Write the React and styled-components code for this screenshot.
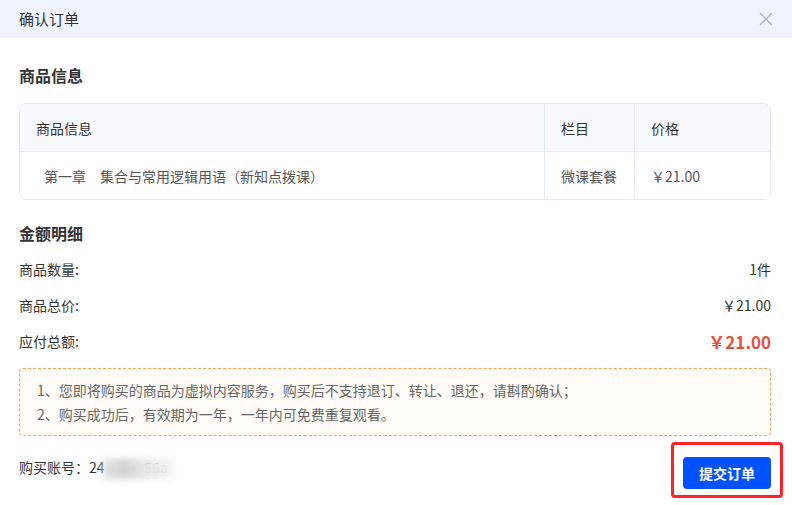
import React from "react";
import styled, { createGlobalStyle } from "styled-components";

const Global = createGlobalStyle`
  html, body { margin: 0; padding: 0; background: #fff; }
  body { font-family: "Noto Sans CJK SC", "Noto Sans", sans-serif; color: #333; }
  * { box-sizing: border-box; }
`;

const Dialog = styled.div`
  width: 792px;
  height: 505px;
  background: #fff;
  display: flex;
  flex-direction: column;
`;

const Header = styled.div`
  height: 38px;
  background: #eef3fd;
  display: flex;
  align-items: center;
  justify-content: space-between;
  padding: 0 18px 0 19px;
`;

const Title = styled.div`
  font-size: 15px;
  color: #333;
  line-height: 20px;
`;

const Close = styled.button`
  border: 0;
  background: transparent;
  padding: 0;
  width: 16px;
  height: 16px;
  display: flex;
  align-items: center;
  justify-content: center;
  cursor: pointer;
`;

const Body = styled.div`
  padding: 0 21px 0 19px;
  display: flex;
  flex-direction: column;
`;

const SectionTitle = styled.div`
  font-size: 16px;
  font-weight: 700;
  color: #333;
  line-height: 22px;
  margin-top: ${(p) => p.$top}px;
`;

const Table = styled.div`
  margin-top: 17px;
  border: 1px solid #e3eaf7;
  border-radius: 7px;
  overflow: hidden;
  display: grid;
  grid-template-columns: 524px 90px 1fr;
`;

const Cell = styled.div`
  height: ${(p) => (p.$head ? 48 : 47)}px;
  display: flex;
  align-items: center;
  padding-left: ${(p) => p.$pad}px;
  font-size: 14px;
  color: ${(p) => (p.$head ? "#333" : "#555")};
  background: ${(p) => (p.$head ? "#f8f9fd" : "#fff")};
  border-bottom: ${(p) => (p.$head ? "1px solid #e3eaf7" : "0")};
  border-left: ${(p) => (p.$first ? "0" : "1px solid #e3eaf7")};
  white-space: pre;
`;

const DetailList = styled.div`
  display: flex;
  flex-direction: column;
`;

const DetailTitle = styled.div`
  font-size: 16px;
  font-weight: 700;
  color: #333;
  line-height: 36px;
  margin-top: 15px;
`;

const DetailRow = styled.div`
  height: 36px;
  display: flex;
  align-items: center;
  justify-content: space-between;
  font-size: 14px;
  color: #333;
`;

const Value = styled.span`
  font-size: ${(p) => (p.$total ? "17px" : "14px")};
  font-weight: ${(p) => (p.$total ? 700 : 400)};
  color: ${(p) => (p.$total ? "#e9503e" : "#333")};
`;

const Notice = styled.div`
  margin-top: 9px;
  border: 1px dashed #f4a45a;
  border-radius: 4px;
  background: #fffbf6;
  padding: 9px 17px;
  font-size: 14px;
  line-height: 24px;
  color: #666;
`;

const Footer = styled.div`
  display: flex;
  justify-content: space-between;
  align-items: flex-start;
  margin-top: 21px;
`;

const Account = styled.div`
  font-size: 14px;
  line-height: 20px;
  color: #333;
  display: flex;
  align-items: center;
`;

const Masked = styled.span`
  position: relative;
  display: inline-block;
  padding-left: 40px;
  color: #555;
`;

const Blur = styled.span`
  position: absolute;
  left: -2px;
  top: 2px;
  width: 70px;
  height: 20px;
  background: linear-gradient(90deg, #e2e2e2 0%, #cfcfcf 30%, #e6e6e6 60%, #f3f3f3 100%);
  filter: blur(3px);
  opacity: 0.95;
`;

const ButtonWrap = styled.div`
  position: relative;
`;

const Highlight = styled.div`
  position: absolute;
  left: -12px;
  top: -15px;
  right: -12px;
  bottom: -9px;
  border: 3px solid #ff2222;
  border-radius: 4px;
  pointer-events: none;
`;

const Submit = styled.button`
  width: 88px;
  height: 32px;
  border: 0;
  border-radius: 4px;
  background: #0052ff;
  color: #fff;
  font-family: inherit;
  font-size: 14px;
  font-weight: 700;
  cursor: pointer;
`;

export default function App() {
  return (
    <>
      <Global />
      <Dialog>
        <Header>
          <Title>确认订单</Title>
          <Close aria-label="close">
            <svg width="14" height="14" viewBox="0 0 14 14">
              <path d="M1 1L13 13M13 1L1 13" stroke="#a9b4c8" strokeWidth="1.3" fill="none" />
            </svg>
          </Close>
        </Header>
        <Body>
          <SectionTitle $top={26}>商品信息</SectionTitle>
          <Table>
            <Cell $head $first $pad={16}>商品信息</Cell>
            <Cell $head $pad={16}>栏目</Cell>
            <Cell $head $pad={16}>价格</Cell>
            <Cell $first $pad={24}>第一章　集合与常用逻辑用语（新知点拨课）</Cell>
            <Cell $pad={16}>微课套餐</Cell>
            <Cell $pad={16}>￥21.00</Cell>
          </Table>
          <DetailList>
            <DetailTitle>金额明细</DetailTitle>
            <DetailRow>
              <span>商品数量:</span>
              <Value>1件</Value>
            </DetailRow>
            <DetailRow>
              <span>商品总价:</span>
              <Value>￥21.00</Value>
            </DetailRow>
            <DetailRow>
              <span>应付总额:</span>
              <Value $total>￥21.00</Value>
            </DetailRow>
          </DetailList>
          <Notice>
            <div>1、您即将购买的商品为虚拟内容服务，购买后不支持退订、转让、退还，请斟酌确认；</div>
            <div>2、购买成功后，有效期为一年，一年内可免费重复观看。</div>
          </Notice>
          <Footer>
            <Account>
              购买账号：24
              <Masked>
                <Blur />
                56a
              </Masked>
            </Account>
            <ButtonWrap>
              <Submit>提交订单</Submit>
              <Highlight />
            </ButtonWrap>
          </Footer>
        </Body>
      </Dialog>
    </>
  );
}
